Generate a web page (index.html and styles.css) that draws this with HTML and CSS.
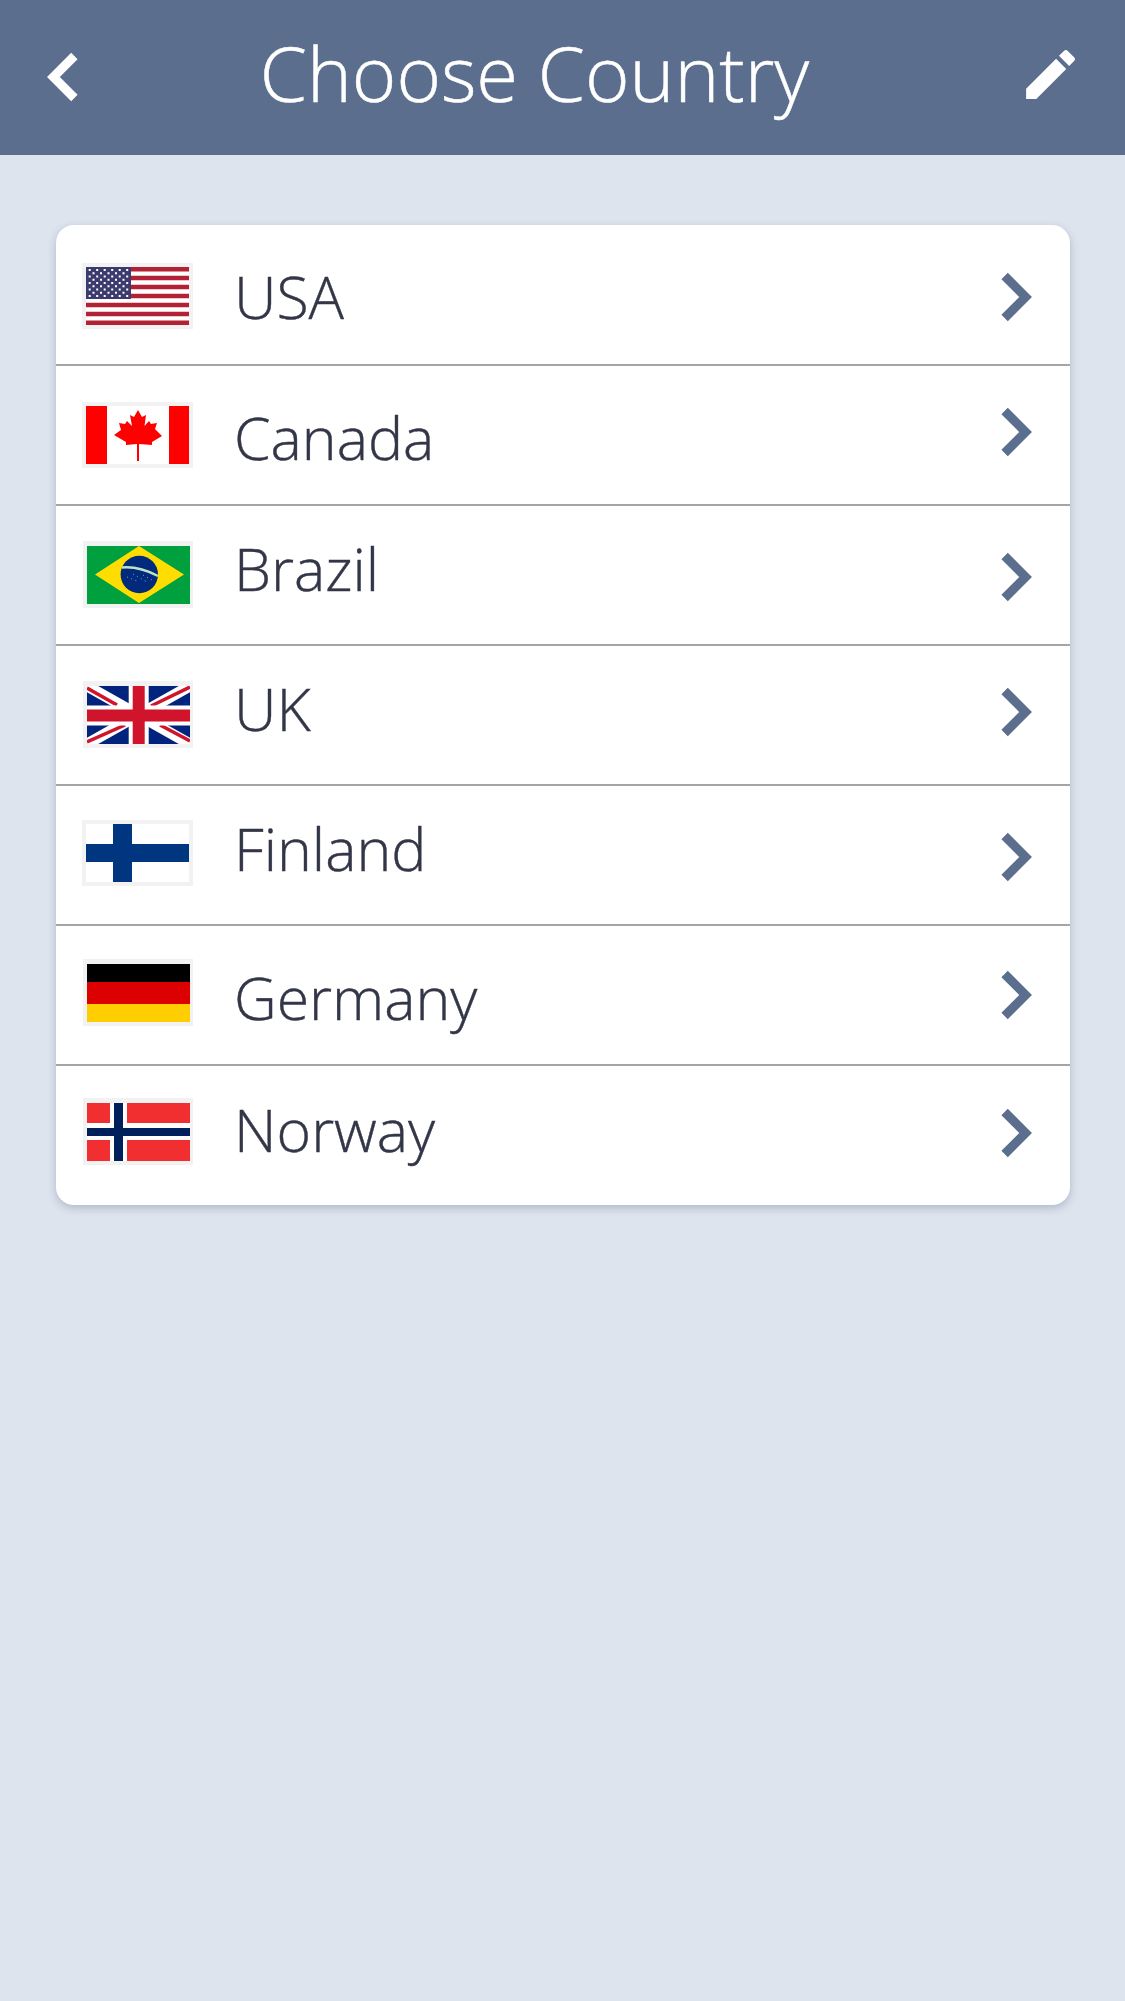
FILE: index.html
```html
<!DOCTYPE html>
<html lang="en">
<head>
  <meta charset="UTF-8">
  <title>Choose Country</title>
  <link rel="stylesheet" href="styles.css">
</head>
<body>

  <div class="header">
    <svg class="back-icon" viewBox="0 0 36 56"><path d="M30.4 7 L9.400 28 L30.400 49"/></svg>
    <div class="title">Choose Country</div>
    <svg class="edit-icon" viewBox="0 0 24 24"><path d="M3 17.25V21h3.75L17.81 9.94l-3.75-3.75L3 17.25zM20.71 7.04a1 1 0 0 0 0-1.41l-2.34-2.34a1 1 0 0 0-1.41 0l-1.83 1.83 3.75 3.75 1.83-1.83z"/></svg>
  </div>

  <div class="list">
    <div class="row">
      <span class="flag">
        <svg viewBox="0 0 103 58" preserveAspectRatio="none">
          <rect width="103" height="58" fill="#fff"/>
          <path d="M0 2.200h103M0 11.100h103M0 20h103M0 29h103M0 38h103M0 47h103M0 55.800h103" stroke="#b22234" stroke-width="4.500"/>
          <rect width="45" height="32" fill="#3c3b6e"/>
          <path d="M2.700 3h40M2.700 9.500h40M2.700 16h40M2.700 22.500h40M2.700 29h40" stroke="#fff" stroke-width="2" stroke-dasharray="2 5.500"/>
          <path d="M6.500 6.250h32M6.500 12.750h32M6.500 19.250h32M6.500 25.750h32" stroke="#fff" stroke-width="2" stroke-dasharray="2 5.500"/>
        </svg>
      </span>
      <span class="name low">USA</span>
      <svg class="arrow down" viewBox="0 0 36 56"><path d="M5.600 7 L26.600 28 L5.600 49"/></svg>
    </div>
    <div class="row">
      <span class="flag">
        <svg viewBox="0 0 103 58" preserveAspectRatio="none">
          <rect width="103" height="58" fill="#fff"/>
          <rect width="21" height="58" fill="#f00"/>
          <rect x="83" width="20" height="58" fill="#f00"/>
          <path d="M52 4 L56 11 L60 9 L58.500 20 L63 15 L65 18 L71 17 L69 23 L76 30 L66 36 L66 39 L53 38 L53 55 L51 55 L51 38 L40 39 L40 36 L28 29 L35 24 L33 17 L39 18 L41 15 L46 20 L44 9 L48 11 Z" fill="#f00"/>
        </svg>
      </span>
      <span class="name low">Canada</span>
      <svg class="arrow up" viewBox="0 0 36 56"><path d="M5.600 7 L26.600 28 L5.600 49"/></svg>
    </div>
    <div class="row">
      <span class="flag wide">
        <svg viewBox="0 0 103 58" preserveAspectRatio="none">
          <rect width="103" height="58" fill="#00a03e"/>
          <path d="M52 0 L97 28.500 L52 57 L8 28.500 Z" fill="#fd0"/>
          <circle cx="52.300" cy="28.500" r="18.700" fill="#012a7c"/>
          <path d="M35 21.500 Q52 20 71 30" stroke="#bfe3c0" stroke-width="2.500" fill="none"/>
          <path d="M40 31l10 4M46 28l14 8M56 29l9 5" stroke="#8fa3cc" stroke-width="1" stroke-dasharray="1 3.500"/>
        </svg>
      </span>
      <span class="name">Brazil</span>
      <svg class="arrow down" viewBox="0 0 36 56"><path d="M5.600 7 L26.600 28 L5.600 49"/></svg>
    </div>
    <div class="row">
      <span class="flag wide">
        <svg viewBox="0 0 103 58" preserveAspectRatio="none">
          <rect width="103" height="58" fill="#00247d"/>
          <path d="M0 0 L103 58 M103 0 L0 58" stroke="#fff" stroke-width="11"/>
          <path d="M0 2 L30 19 M103 1 L64 20 M0 56 L38 39 M103 55 L73 39" stroke="#cf142b" stroke-width="3.500"/>
          <path d="M51.700 0 V58 M0 29.500 H103" stroke="#fff" stroke-width="20"/>
          <path d="M51.700 0 V58 M0 29.500 H103" stroke="#cf142b" stroke-width="12"/>
        </svg>
      </span>
      <span class="name">UK</span>
      <svg class="arrow up" viewBox="0 0 36 56"><path d="M5.600 7 L26.600 28 L5.600 49"/></svg>
    </div>
    <div class="row">
      <span class="flag">
        <svg viewBox="0 0 103 58" preserveAspectRatio="none">
          <rect width="103" height="58" fill="#fff"/>
          <rect x="27" width="19" height="58" fill="#003580"/>
          <rect y="20" width="103" height="18" fill="#003580"/>
        </svg>
      </span>
      <span class="name">Finland</span>
      <svg class="arrow down" viewBox="0 0 36 56"><path d="M5.600 7 L26.600 28 L5.600 49"/></svg>
    </div>
    <div class="row">
      <span class="flag wide">
        <svg viewBox="0 0 103 58" preserveAspectRatio="none">
          <rect width="103" height="18" fill="#000"/>
          <rect y="18" width="103" height="22" fill="#d00"/>
          <rect y="40" width="103" height="18" fill="#ffce00"/>
        </svg>
      </span>
      <span class="name low">Germany</span>
      <svg class="arrow" viewBox="0 0 36 56"><path d="M5.600 7 L26.600 28 L5.600 49"/></svg>
    </div>
    <div class="row">
      <span class="flag wide">
        <svg viewBox="0 0 103 58" preserveAspectRatio="none">
          <rect width="103" height="58" fill="#f22f30"/>
          <rect x="23" width="17" height="58" fill="#fff"/>
          <rect y="20" width="103" height="17" fill="#fff"/>
          <rect x="27" width="9" height="58" fill="#00205b"/>
          <rect y="25" width="103" height="8" fill="#00205b"/>
        </svg>
      </span>
      <span class="name">Norway</span>
      <svg class="arrow up" viewBox="0 0 36 56"><path d="M5.600 7 L26.600 28 L5.600 49"/></svg>
    </div>
  </div>

</body>
</html>
```

FILE: styles.css
```css
* { box-sizing: border-box; margin: 0; padding: 0; }
body {
  font-family: "Open Sans", "Noto Sans", sans-serif;
  background: #dde4ee;
  height: 2001px;
  overflow: hidden;
}

/* header */
.header {
  height: 155px;
  background: #5b6e8d;
  display: flex;
  align-items: center;
  padding: 0 42px 0 44px;
  color: #fff;
}
.title {
  flex: 1;
  text-align: center;
  font-size: 76px;
  font-weight: 300;
  -webkit-text-stroke: 0.5px #fff;
  padding: 0 29px 10px 0;
}
.back-icon {
  width: 36px;
  height: 56px;
  margin-bottom: 2px;
  fill: none;
  stroke: #fff;
  stroke-width: 9;
}
.edit-icon {
  width: 65px;
  height: 65px;
  margin-bottom: 7px;
  fill: #fff;
}

/* list card */
.list {
  margin: 70px 55px 0 56px;
  background: #fff;
  border-radius: 18px;
  box-shadow: 0 3px 8px rgba(70,85,115,0.3);
}
.row {
  height: 140px;
  display: flex;
  align-items: center;
  padding: 0 35px 0 26px;
  border-bottom: 2px solid #a3a6a9;
}
.row:first-child { height: 141px; }
.row:last-child { height: 139px; border-bottom: none; }

.flag {
  width: 111px;
  height: 66px;
  border: 4px solid #f2f2f2;
  flex-shrink: 0;
}
.flag.wide {
  width: 110px;
  height: 67px;
  margin-left: 1px;
  border-width: 5px 3px 4px 4px;
}
.flag svg {
  display: block;
  width: 100%;
  height: 100%;
}
.row:nth-child(1) .flag { margin-top: 3px; }
.row:nth-child(3) .flag,
.row:nth-child(4) .flag { margin-bottom: 1px; }
.row:nth-child(5) .flag { margin-bottom: 4px; }
.row:nth-child(6) .flag { margin-bottom: 5px; }
.row:nth-child(7) .flag { margin-bottom: 8px; }

.name {
  flex: 1;
  margin: 0 0 14px 41px;
  font-size: 59px;
  font-weight: 300;
  -webkit-text-stroke: 0.4px #333647;
  color: #333647;
}
.row .wide + .name { margin-left: 41px; }
.name.low { margin: 3px 0 0 41px; }

.arrow {
  width: 36px;
  height: 56px;
  fill: none;
  stroke: #5b6e8d;
  stroke-width: 9;
}
.arrow.up { margin-bottom: 6px; }
.arrow.down { margin-top: 4px; }
```
